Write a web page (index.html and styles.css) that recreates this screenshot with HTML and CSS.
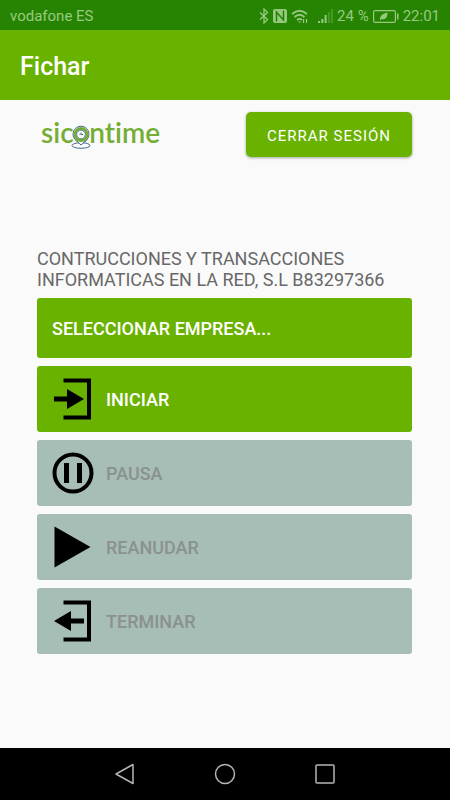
FILE: index.html
```html
<!DOCTYPE html>
<html lang="es">
<head>
<meta charset="utf-8">
<meta name="viewport" content="width=device-width, initial-scale=1">
<title>Fichar</title>
<link rel="stylesheet" href="styles.css">
</head>
<body>
<div class="status">
  <span>vodafone ES</span>
  <div class="status-icons">
    <svg class="bluetooth" width="10" height="16" viewBox="0 0 10 16" fill="none" stroke="currentColor" stroke-width="1.3"><path d="M1 4.500l7.500 7L5 15V1l3.500 3.500L1 11.500"/></svg>
    <svg class="nfc" width="14" height="14" viewBox="0 0 14 14"><rect width="14" height="14" rx="2" fill="currentColor"/><path d="M3.500 12.500V3l7 8V1.500" fill="none" stroke="#268402" stroke-width="1.500"/></svg>
    <svg class="wifi" width="18" height="15" viewBox="0 0 18 15" fill="none" stroke="currentColor" stroke-width="1.800"><path d="M1 5Q8.500-1.500 16 5M3.500 8Q8.500 3.500 13.500 8M6 11Q8.500 8.800 11 11"/><path d="M7 12.500h3L8.500 14z" fill="currentColor" stroke="none"/><path d="M12.500 14v-4M15.500 10v4" stroke-width="1.200"/></svg>
    <svg class="signal" width="15" height="14" viewBox="0 0 15 14" fill="currentColor"><path d="M0 12h2v2H0zM3.300 10h2v4h-2zM6.600 6h2v8h-2z"/><path opacity=".3" d="M9.900 3h2v11h-2zM13 0h2v14h-2z"/></svg>
    <span>24 %</span>
    <svg class="battery" width="26" height="13" viewBox="0 0 26 13"><rect x=".6" y=".6" width="21.800" height="11.800" rx="1.500" fill="none" stroke="currentColor" stroke-width="1.200"/><path d="M24 3.500h1.500v6H24z" fill="currentColor"/><path d="M7 10c0-5 3-6.500 7.500-7.500 0 5-2 7.500-6 6.500L7 10.800z" fill="currentColor"/></svg>
    <span>22:01</span>
  </div>
</div>
<header class="appbar"><h1>Fichar</h1></header>
<main class="content">
  <div class="top">
    <div class="logo">sic<span class="logo-o">o<svg class="pin" width="20" height="30" viewBox="0 0 20 30" fill="none" stroke="#31597c"><ellipse cx="10" cy="25.500" rx="9" ry="2.800" stroke-width=".9"/><path d="M10 25L4 19.500A8 8 0 1 1 16 19.500z" fill="#fafafa" stroke-width=".9"/><circle cx="10" cy="14.500" r="6" stroke="#76ad35" stroke-width="2.800"/><circle cx="10" cy="14.500" r="4.300" stroke-width=".7"/><path d="M10 12.500v2h2M8.500 14.500h1" stroke-width=".9"/></svg></span>ntime</div>
    <button class="logout" type="button">CERRAR SESIÓN</button>
  </div>
  <p class="company">CONTRUCCIONES Y TRANSACCIONES INFORMATICAS EN LA RED, S.L B83297366</p>
  <div class="actions">
    <button class="action select" type="button">SELECCIONAR EMPRESA...</button>
    <button class="action" type="button">
      <svg width="42" height="42" viewBox="0 0 42 42"><path d="M11.500 2.500h25.500v37H11.500" fill="none" stroke="#000" stroke-width="4"/><path d="M2 18.500h13V11l17 10-17 10v-7.500H2z"/></svg>
      INICIAR</button>
    <button class="action" type="button" disabled>
      <svg width="42" height="42" viewBox="0 0 42 42"><circle cx="21" cy="21" r="18.500" fill="none" stroke="#000" stroke-width="4"/><path d="M12 11h5v20h-5zM25 11h5v20h-5z"/></svg>
      PAUSA</button>
    <button class="action" type="button" disabled>
      <svg width="42" height="42" viewBox="0 0 42 42"><path d="M2.500 .5L38.500 21 2.500 41.500z"/></svg>
      REANUDAR</button>
    <button class="action" type="button" disabled>
      <svg width="42" height="42" viewBox="0 0 42 42"><path d="M11.500 2.500h25.500v37H11.500" fill="none" stroke="#000" stroke-width="4"/><path d="M32 18.500H19V11L2 21l17 10v-7.500h13z"/></svg>
      TERMINAR</button>
  </div>
</main>
<nav class="navbar" aria-label="Sistema">
  <button type="button" aria-label="Atrás"><svg width="22" height="22" viewBox="0 0 22 22"><path d="M19 1.500v19L2 11z"/></svg></button>
  <button type="button" aria-label="Inicio"><svg width="22" height="22" viewBox="0 0 22 22"><circle cx="11" cy="11" r="9.500"/></svg></button>
  <button type="button" aria-label="Recientes"><svg width="22" height="22" viewBox="0 0 22 22"><rect x="2" y="2" width="18" height="18" rx="1"/></svg></button>
</nav>
</body>
</html>
```

FILE: styles.css
```css
* { box-sizing: border-box; }
body {
  margin: 0;
  min-height: 100vh;
  display: flex;
  flex-direction: column;
  background: #fafafa;
  font-family: Roboto, sans-serif;
}
button {
  border: 0;
  font-family: inherit;
}
.status {
  height: 30px;
  padding: 2px 10px 0;
  display: flex;
  align-items: center;
  justify-content: space-between;
  background: #268402;
  color: #96ca80;
  font-size: 15px;
}
.status-icons {
  display: flex;
  align-items: center;
  gap: 4px;
}
.wifi { margin-right: 5px; }
.appbar {
  height: 70px;
  padding: 2px 20px 0;
  display: flex;
  align-items: center;
  background: #69b200;
  color: #fff;
}
.appbar h1 {
  margin: 0;
  font-size: 25px;
  font-weight: 500;
}
.content {
  flex: 1;
  padding: 12px 38px 0 37px;
}
.top {
  display: flex;
  align-items: flex-start;
  justify-content: space-between;
}
.logo {
  padding: 3px 4px 0;
  color: #76ad35;
  font-family: Lato, sans-serif;
  font-size: 28px;
  font-weight: 600;
  font-variant-ligatures: none;
  line-height: 34px;
}
.logo-o { position: relative; }
.pin {
  position: absolute;
  left: -2px;
  top: 5px;
}
.logout {
  height: 45px;
  padding: 2px 21px 0;
  border-radius: 5px;
  background: #69b200;
  box-shadow: 0 1px 3px rgba(0, 0, 0, .35);
  color: #fff;
  font-size: 15px;
  letter-spacing: 1px;
}
.company {
  margin: 91px 0 8px;
  color: #686868;
  font-size: 18px;
  line-height: 21px;
}
.actions {
  display: flex;
  flex-direction: column;
  gap: 8px;
}
.action {
  width: 100%;
  height: 66px;
  padding: 0 15px;
  display: flex;
  align-items: center;
  gap: 12px;
  border-radius: 3px;
  background: #69b200;
  color: #fff;
  font-size: 18px;
  font-weight: 500;
  text-align: left;
}
.action.select { height: 60px; }
.action:disabled {
  background: #a7beb6;
  color: #8a918e;
}
.navbar {
  height: 52px;
  display: flex;
  align-items: center;
  justify-content: center;
  gap: 78px;
  background: #000;
}
.navbar button {
  padding: 0;
  display: flex;
  background: none;
}
.navbar svg {
  fill: none;
  stroke: #b5b5b5;
  stroke-width: 1.5;
  stroke-linejoin: round;
}
```
